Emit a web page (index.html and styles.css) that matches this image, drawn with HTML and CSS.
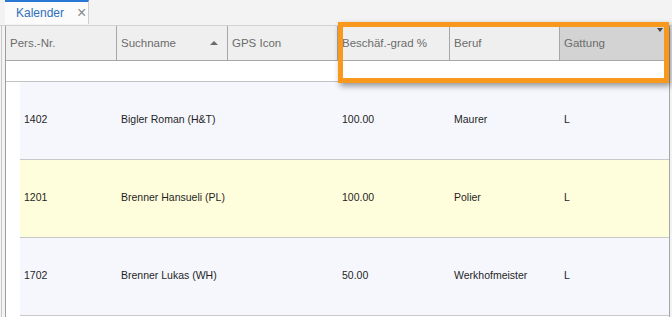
FILE: index.html
```html
<!DOCTYPE html>
<html lang="de">
<head>
    <meta charset="UTF-8">
    <title>Kalender</title>
    <link rel="stylesheet" href="styles.css">
</head>
<body>
<div class="seite">
    <div class="tab-leiste">
        <div class="tab">
            <span class="tab-titel">Kalender</span>
            <span class="tab-zu">&times;</span>
        </div>
    </div>

    <div class="tabelle">
        <div class="kopf">
            <div class="kopf-zelle">Pers.-Nr.</div>
            <div class="kopf-zelle">Suchname <span class="sortierung"></span></div>
            <div class="kopf-zelle">GPS Icon</div>
            <div class="kopf-zelle">Beschäf.-grad %</div>
            <div class="kopf-zelle">Beruf</div>
            <div class="kopf-zelle aktiv">Gattung <span class="filter"></span></div>
        </div>
        <div class="filter-zeile"></div>

        <div class="koerper">
            <div class="einzug"></div>
            <div class="zeilen">
                <div class="zeile">
                    <div>1402</div><div>Bigler Roman (H&amp;T)</div><div></div>
                    <div>100.00</div><div>Maurer</div><div>L</div>
                </div>
                <div class="zeile gelb">
                    <div>1201</div><div>Brenner Hansueli (PL)</div><div></div>
                    <div>100.00</div><div>Polier</div><div>L</div>
                </div>
                <div class="zeile">
                    <div>1702</div><div>Brenner Lukas (WH)</div><div></div>
                    <div>50.00</div><div>Werkhofmeister</div><div>L</div>
                </div>
            </div>
        </div>
    </div>

    <!-- Markierung ueber den Spalten -->
    <div class="markierung"></div>
</div>
</body>
</html>
```

FILE: styles.css
```css
/* Grundlayout */
body {
    margin: 0;
    background: #f3f3f3;
    font-family: "Liberation Sans", Arial, sans-serif;
    overflow: hidden;
}
.seite {
    position: relative;
    width: 672px;
    height: 317px;
}

/* Tab oben */
.tab-leiste {
    height: 25px;
    padding-left: 5px;
    border-bottom: 1px solid #d2d2d2;
    display: flex;
}
.tab {
    width: 84px;
    height: 24px;
    margin-bottom: -1px;
    background: #fbfbfb;
    border-top: 2px solid #2b78d4;
    border-right: 1px solid #cfcfcf;
    display: flex;
    align-items: center;
    box-sizing: border-box;
    padding-left: 11px;
}
.tab-titel {
    color: #2e6fbd;
    font-size: 12px;
}
.tab-zu {
    color: #8a8a8a;
    font-size: 16px;
    line-height: 16px;
    margin-left: 13px;
}

/* Tabelle */
.tabelle {
    margin-left: 5px;
    width: 665px;
    height: 292px;
    border-left: 1px solid #9d9d9d;
    border-right: 1px solid #a6a6a6;
    box-shadow: -3px 0 0 #f3f3f3, -4px 0 0 #c9c9c9;
    background: #ffffff;
    box-sizing: border-box;
}
.kopf {
    display: grid;
    grid-template-columns: 111px 111px 110px 112px 110px 104px;
    height: 34px;
    border-bottom: 1px solid #a6a6a6;
    background: #efefef;
}
.kopf-zelle {
    position: relative;
    display: flex;
    align-items: center;
    padding-left: 4px;
    border-right: 1px solid #a6a6a6;
    color: #6c6c6c;
    font-size: 11.5px;
}
.kopf-zelle.aktiv {
    background: #d3d3d3;
    border-right: none;
}
.sortierung {
    position: absolute;
    right: 9px;
    top: 15px;
    border-left: 4px solid transparent;
    border-right: 4px solid transparent;
    border-bottom: 4px solid #6a6a6a;
}
.filter {
    position: absolute;
    right: 1px;
    top: 2px;
    border-left: 3px solid transparent;
    border-right: 3px solid transparent;
    border-top: 4px solid #444444;
}
.filter-zeile {
    height: 20px;
    border-bottom: 1px solid #c3c3c3;
}

/* Datenzeilen */
.koerper {
    display: flex;
}
.einzug {
    width: 14px;
    background: #ffffff;
}
.zeilen {
    flex: 1;
}
.zeile {
    display: grid;
    grid-template-columns: 97px 111px 110px 112px 110px 1fr;
    height: 77px;
    align-items: center;
    background: #f6f7fd;
    border-bottom: 1px solid #c8c8c8;
    color: #1f1f1f;
    font-size: 10.5px;
}
.zeile.gelb {
    background: #fffedc;
}
.zeile div {
    padding-left: 4px;
    padding-bottom: 3px;
}

/* orange Markierung */
.markierung {
    position: absolute;
    left: 338px;
    top: 22px;
    width: 321px;
    height: 51px;
    border: 5px solid #f8981d;
    box-shadow: 2px 3px 6px rgba(0, 0, 0, 0.4);
}
```
